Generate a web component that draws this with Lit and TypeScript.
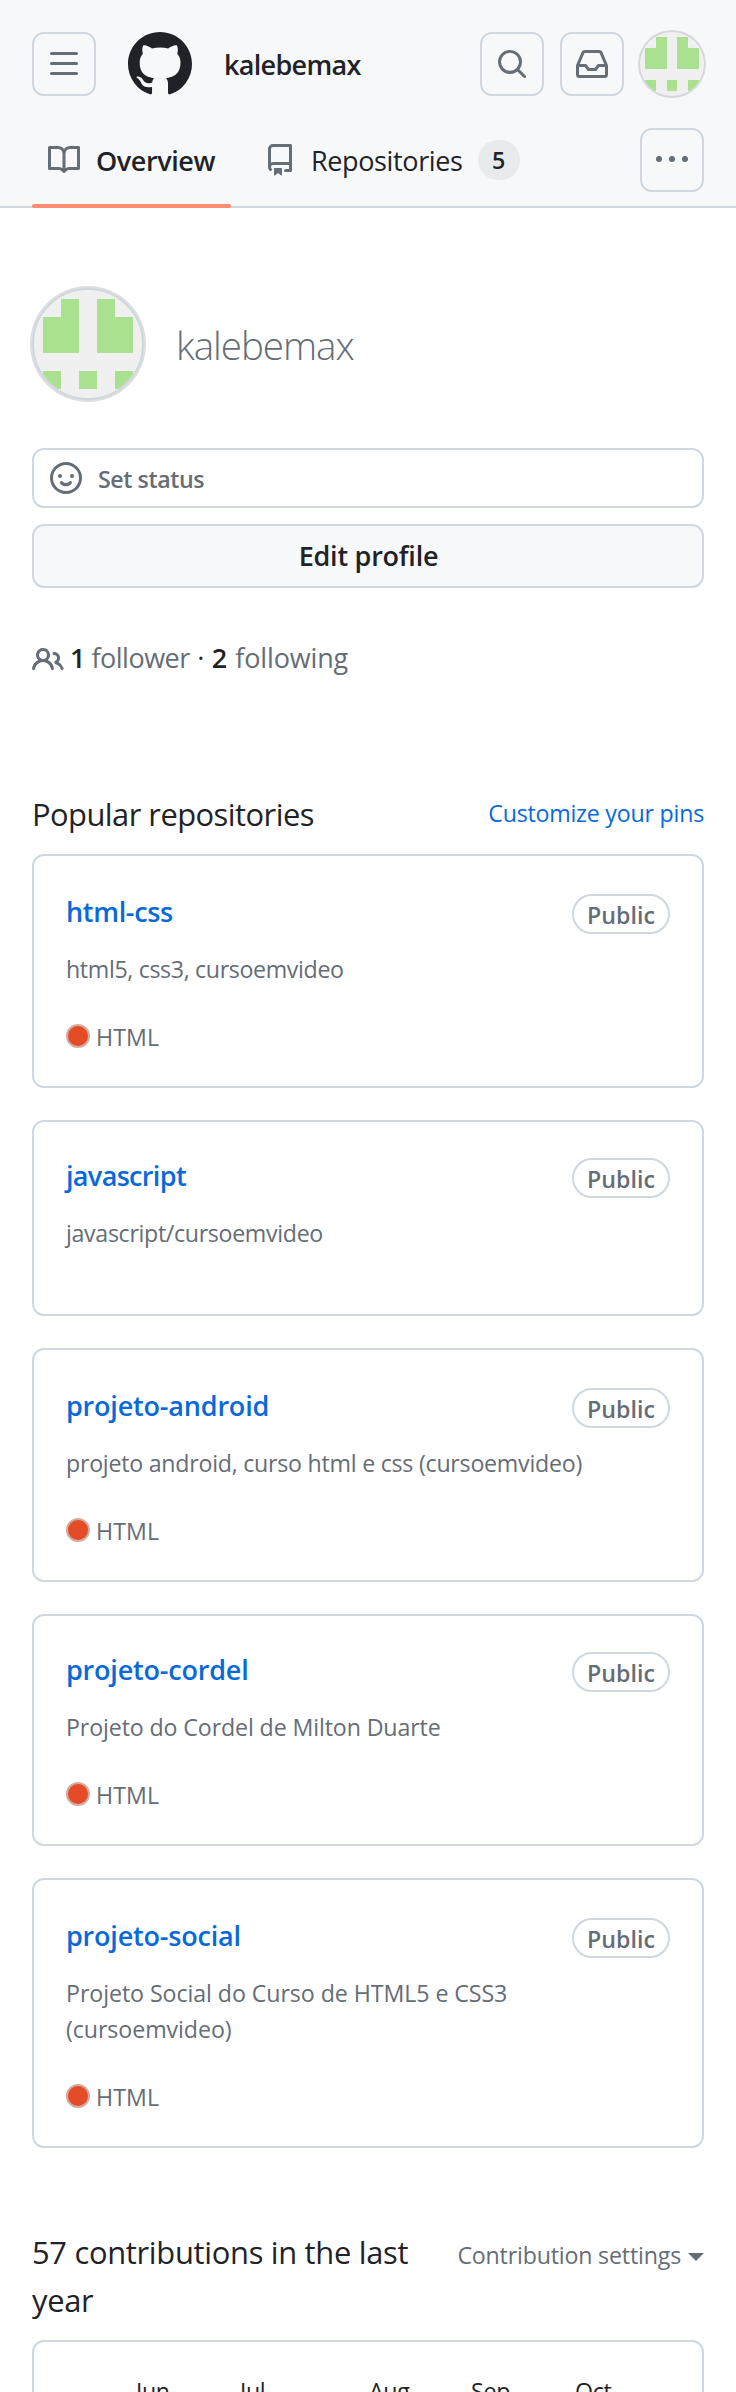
import { LitElement, html, css, svg } from "lit";
import { customElement, property } from "lit/decorators.js";
import { styleMap } from "lit/directives/style-map.js";

const icons: Record<string, string> = {
  bars: "M1 2.75A.75.75 0 0 1 1.75 2h12.5a.75.75 0 0 1 0 1.5H1.75A.75.75 0 0 1 1 2.75Zm0 5A.75.75 0 0 1 1.75 7h12.5a.75.75 0 0 1 0 1.5H1.75A.75.75 0 0 1 1 7.75ZM1.75 12h12.5a.75.75 0 0 1 0 1.5H1.75a.75.75 0 0 1 0-1.5Z",
  mark: "M8 0c4.42 0 8 3.58 8 8a8.013 8.013 0 0 1-5.45 7.59c-.4.08-.55-.17-.55-.38 0-.27.01-1.13.01-2.2 0-.75-.25-1.23-.54-1.48 1.78-.2 3.65-.88 3.65-3.95 0-.88-.31-1.59-.82-2.15.08-.2.36-1.02-.08-2.12 0 0-.67-.22-2.2.82-.64-.18-1.32-.27-2-.27-.68 0-1.36.09-2 .27-1.53-1.03-2.2-.82-2.2-.82-.44 1.1-.16 1.92-.08 2.12-.51.56-.82 1.28-.82 2.15 0 3.06 1.86 3.75 3.64 3.95-.23.2-.44.55-.51 1.07-.46.21-1.61.55-2.33-.66-.15-.24-.6-.83-1.23-.82-.67.01-.27.38.01.53.34.19.73.9.82 1.13.16.45.68 1.31 2.69.94 0 .67.01 1.3.01 1.49 0 .21-.15.45-.55.38A7.995 7.995 0 0 1 0 8c0-4.42 3.58-8 8-8Z",
  search: "M10.68 11.74a6 6 0 0 1-7.922-8.982 6 6 0 0 1 8.982 7.922l3.04 3.04a.749.749 0 0 1-.326 1.275.749.749 0 0 1-.734-.215ZM11.5 7a4.499 4.499 0 1 0-8.997 0A4.499 4.499 0 0 0 11.5 7Z",
  inbox: "M2.8 2.06A1.75 1.75 0 0 1 4.41 1h7.18c.7 0 1.333.417 1.61 1.06l2.74 6.395c.04.093.06.194.06.295v4.5A1.75 1.75 0 0 1 14.25 15H1.75A1.75 1.75 0 0 1 0 13.25v-4.5c0-.101.02-.202.06-.295Zm1.61.44a.25.25 0 0 0-.23.152L1.887 8H4.75a.75.75 0 0 1 .6.3L6.625 10h2.75l1.275-1.7a.75.75 0 0 1 .6-.3h2.863L11.82 2.652a.25.25 0 0 0-.23-.152Zm10.09 7h-2.875l-1.275 1.7a.75.75 0 0 1-.6.3h-3.5a.75.75 0 0 1-.6-.3L4.375 9.5H1.5v3.75c0 .138.112.25.25.25h12.5a.25.25 0 0 0 .25-.25Z",
  book: "M0 1.75A.75.75 0 0 1 .75 1h4.253c1.227 0 2.317.59 3 1.501A3.743 3.743 0 0 1 11.006 1h4.245a.75.75 0 0 1 .75.75v10.5a.75.75 0 0 1-.75.75h-4.507a2.25 2.25 0 0 0-1.591.659l-.622.621a.75.75 0 0 1-1.06 0l-.622-.621A2.25 2.25 0 0 0 5.258 13H.75a.75.75 0 0 1-.75-.75Zm7.251 10.324.004-5.073-.002-2.253A2.25 2.25 0 0 0 5.003 2.5H1.5v9h3.757a3.75 3.75 0 0 1 1.994.574ZM8.755 4.75l-.004 7.322a3.752 3.752 0 0 1 1.992-.572H14.5v-9h-3.495a2.25 2.25 0 0 0-2.25 2.25Z",
  repo: "M2 2.5A2.5 2.5 0 0 1 4.5 0h8.75a.75.75 0 0 1 .75.75v12.5a.75.75 0 0 1-.75.75h-2.5a.75.75 0 0 1 0-1.5h1.75v-2h-8a1 1 0 0 0-.714 1.7.75.75 0 1 1-1.072 1.05A2.495 2.495 0 0 1 2 11.5Zm10.5-1h-8a1 1 0 0 0-1 1v6.708A2.486 2.486 0 0 1 4.5 9h8ZM5 12.25a.25.25 0 0 1 .25-.25h3.5a.25.25 0 0 1 .25.25v3.25a.25.25 0 0 1-.4.2l-1.45-1.087a.249.249 0 0 0-.3 0L5.4 15.7a.25.25 0 0 1-.4-.2Z",
  kebab: "M8 9a1.5 1.5 0 1 0 0-3 1.5 1.5 0 0 0 0 3ZM1.5 9a1.5 1.5 0 1 0 0-3 1.5 1.5 0 0 0 0 3Zm13 0a1.5 1.5 0 1 0 0-3 1.5 1.5 0 0 0 0 3Z",
  smiley: "M8 0a8 8 0 1 1 0 16A8 8 0 0 1 8 0ZM1.5 8a6.5 6.5 0 1 0 13 0 6.5 6.5 0 0 0-13 0Zm3.82 1.636a.75.75 0 0 1 1.038.175l.007.009c.103.118.22.222.35.31.264.178.683.37 1.285.37.602 0 1.02-.192 1.285-.371.13-.088.247-.192.35-.31l.007-.008a.75.75 0 0 1 1.222.87c-.09.12-.17.22-.28.32-.16.166-.338.316-.53.445-.63.418-1.37.638-2.127.629-.946 0-1.652-.308-2.126-.63a3.331 3.331 0 0 1-.715-.657l-.02-.03a.75.75 0 0 1 .17-1.044ZM12 7a1 1 0 1 1-2 0 1 1 0 0 1 2 0ZM5 8a1 1 0 1 1 0-2 1 1 0 0 1 0 2Z",
  people: "M2 5.5a3.5 3.5 0 1 1 5.898 2.549 5.508 5.508 0 0 1 3.034 4.084.75.75 0 1 1-1.482.235 4 4 0 0 0-7.9 0 .75.75 0 0 1-1.482-.236A5.507 5.507 0 0 1 3.102 8.05 3.493 3.493 0 0 1 2 5.5ZM11 4a3.001 3.001 0 0 1 2.22 5.018 5.01 5.01 0 0 1 2.56 3.012.749.749 0 0 1-.885.954.752.752 0 0 1-.549-.514 3.507 3.507 0 0 0-2.522-2.372.75.75 0 0 1-.574-.73v-.352a.75.75 0 0 1 .416-.672A1.5 1.5 0 0 0 11 5.5.75.75 0 0 1 11 4Zm-5.5-.5a2 2 0 1 0-.001 3.999A2 2 0 0 0 5.5 3.5Z",
};

@customElement("gh-icon")
class GhIcon extends LitElement {
  @property() name = "";
  static styles = css`
    :host { display: block; width: 32px; height: 32px; flex: none; color: #656d76; }
    .svg { display: block; width: 100%; height: 100%; fill: currentColor; }
  `;
  render() {
    return html`<svg class="svg" viewBox="0 0 16 16" aria-hidden="true"><path d=${icons[this.name]}></path></svg>`;
  }
}

// Identicon cells, [column, row] on a 5×5 grid.
const cells = [
  [1, 0], [3, 0],
  [0, 1], [1, 1], [3, 1], [4, 1],
  [0, 2], [1, 2], [3, 2], [4, 2],
  [0, 4], [2, 4], [4, 4],
];

@customElement("gh-avatar")
class GhAvatar extends LitElement {
  static styles = css`
    :host { display: block; flex: none; border-radius: 50%; overflow: hidden; background: #f0f0f0; }
    .svg { display: block; width: 100%; height: 100%; fill: #a9e190; shape-rendering: crispEdges; }
  `;
  render() {
    return html`<svg class="svg" viewBox="0 0 12 12">
      ${cells.map(([c, r]) => svg`<rect x=${1 + c * 2} y=${1 + r * 2} width="2" height="2"></rect>`)}
    </svg>`;
  }
}

interface Repo {
  name: string;
  desc: string;
  lang?: string;
  compact?: boolean;
  tracking: number;
  descTracking: number;
}

const repos: Repo[] = [
  { name: "html-css", desc: "html5, css3, cursoemvideo", lang: "HTML", tracking: -0.32, descTracking: -0.35 },
  { name: "javascript", desc: "javascript/cursoemvideo", compact: true, tracking: -0.66, descTracking: -0.33 },
  { name: "projeto-android", desc: "projeto android, curso html e css (cursoemvideo)", lang: "HTML", tracking: -0.19, descTracking: -0.25 },
  { name: "projeto-cordel", desc: "Projeto do Cordel de Milton Duarte", lang: "HTML", compact: true, tracking: -0.2, descTracking: -0.12 },
  { name: "projeto-social", desc: "Projeto Social do Curso de HTML5 e CSS3 (cursoemvideo)", lang: "HTML", tracking: -0.2, descTracking: -0.07 },
];

@customElement("repo-card")
class RepoCard extends LitElement {
  @property({ attribute: false }) repo!: Repo;
  static styles = css`
    :host { display: block; }
    .card { border: 2px solid #d0d7de; border-radius: 12px; padding: 38px 32px 31px; }
    .compact { padding-top: 36px; }
    .top { display: flex; justify-content: space-between; align-items: flex-start; height: 40px; }
    .name { color: #0969da; font-size: 27px; font-weight: 600; line-height: 35px; }
    .pill {
      box-sizing: border-box; width: 98px; height: 40px; border: 2px solid #d0d7de; border-radius: 40px;
      text-align: center; font-size: 23.2px; font-weight: 600; line-height: 38px; color: #656d76;
    }
    .desc { margin: 17px 0 0; font-size: 23.2px; line-height: 36px; color: #656d76; max-width: 540px; }
    .foot { display: flex; align-items: center; gap: 6px; margin-top: 32px; font-size: 23.2px; line-height: 36px; color: #656d76; letter-spacing: 0.1px; }
    .dot { box-sizing: border-box; width: 24px; height: 24px; border-radius: 50%; background: #e34c26; border: 2px solid #d6a9a1; margin-bottom: 2px; }
  `;
  render() {
    const r = this.repo;
    return html`<article class="card ${r.compact ? "compact" : ""}">
      <div class="top">
        <a class="name" style=${styleMap({ letterSpacing: `${r.tracking}px` })}>${r.name}</a>
        <span class="pill">Public</span>
      </div>
      <p class="desc" style=${styleMap({ letterSpacing: `${r.descTracking}px` })}>${r.desc}</p>
      <div class="foot">${r.lang ? html`<span class="dot"></span><span>${r.lang}</span>` : null}</div>
    </article>`;
  }
}

@customElement("app-root")
class AppRoot extends LitElement {
  static styles = css`
    :host {
      display: block; height: 2392px; overflow: hidden; background: #fff; color: #1f2328;
      font-family: "Open Sans", "Noto Sans", sans-serif;
    }
    .header { box-sizing: border-box; height: 208px; padding: 32px 32px 0; background: #f6f8fa; border-bottom: 2px solid #d0d7de; }
    .bar { display: flex; align-items: center; height: 64px; }
    .btn {
      box-sizing: border-box; width: 64px; height: 64px; flex: none; display: grid; place-items: center;
      border: 2px solid #d0d7de; border-radius: 12px;
    }
    .logo { width: 64px; height: 64px; margin-left: 32px; color: #1f2328; }
    .user { margin-left: 32px; font-size: 27px; font-weight: 600; line-height: 35px; letter-spacing: -0.69px; }
    .actions { margin-left: auto; display: flex; gap: 16px; }
    .me { width: 64px; height: 64px; box-shadow: 0 0 0 2px #d5d8dc; }
    .tabs { display: flex; align-items: flex-start; margin-top: 32px; }
    .tab { display: flex; align-items: center; gap: 16px; height: 64px; padding: 0 16px; font-size: 27px; line-height: 35px; }
    .active { position: relative; font-weight: 600; letter-spacing: -0.43px; width: 167px; margin-right: 17px; }
    .active::after { content: ""; position: absolute; left: 0; right: 0; top: 76px; height: 4px; border-radius: 2px; background: #fd8c73; }
    .label { letter-spacing: -0.37px; margin-left: -1px; }
    .count {
      width: 42px; height: 40px; border-radius: 20px; background: #e8ebee; text-align: center;
      font-size: 23.2px; font-weight: 600; line-height: 41px; margin-left: -1px;
    }
    .more { margin-left: auto; }

    .main { display: flex; flex-direction: column; padding: 80px 32px 0; }
    .profile { display: flex; align-items: center; gap: 32px; height: 112px; }
    .portrait { width: 108px; height: 108px; border: 2px solid #d0d7de; box-shadow: 0 0 0 2px #dddedf; }
    .name { margin: 0; padding-top: 2px; font-size: 38.6px; font-weight: 300; line-height: 52px; color: #656d76; letter-spacing: -1.03px; }
    .status {
      box-sizing: border-box; height: 60px; margin-top: 48px; padding: 0 16px; display: flex; align-items: center; gap: 16px;
      border: 2px solid #d0d7de; border-radius: 12px; color: #656d76;
    }
    .status-text { font-size: 23.2px; font-weight: 600; line-height: 36px; letter-spacing: -0.43px; padding-top: 2px; }
    .edit {
      box-sizing: border-box; height: 64px; margin-top: 16px; padding-left: 1px; border: 2px solid #d0d7de; border-radius: 12px; background: #f6f8fa;
      text-align: center; font-size: 27px; font-weight: 600; line-height: 59px; letter-spacing: -0.24px;
    }
    .follow { display: flex; height: 36px; margin-top: 52px; font-size: 27px; line-height: 35px; color: #656d76; }
    .people { margin: 4px 6px 0 0; }
    .num { font-weight: 600; color: #1f2328; }
    .follower { margin-left: 6px; letter-spacing: -0.5px; }
    .sep { width: 22px; text-align: center; color: #1f2328; }
    .following { margin-left: 8px; letter-spacing: -0.14px; }

    .row { display: flex; justify-content: space-between; align-items: flex-start; }
    .heading { margin: 0; font-size: 30.9px; font-weight: 400; line-height: 48px; }
    .popular { margin-top: 114px; }
    .pop-title { letter-spacing: -0.54px; }
    .pins { margin-top: 5px; font-size: 23.2px; line-height: 36px; color: #0969da; letter-spacing: -0.22px; }
    .list { display: flex; flex-direction: column; gap: 32px; margin-top: 16px; }
    .contrib { margin-top: 80px; }
    .contrib-title { width: 400px; letter-spacing: -0.31px; }
    .settings { display: flex; align-items: center; gap: 7px; margin-top: 9px; font-size: 23.2px; line-height: 36px; color: #656d76; letter-spacing: -0.18px; }
    .caret { border: 8px solid transparent; border-top-color: #656d76; border-bottom: 0; margin-top: 4px; }
    .graph {
      box-sizing: border-box; height: 80px; margin-top: 16px; padding: 31px 0 0 102px; border: 2px solid #d0d7de; border-radius: 12px;
      display: grid; grid-template-columns: 104px 129px 102px 104px auto; font-size: 23.2px; line-height: 36px; letter-spacing: -0.3px;
    }
  `;
  render() {
    return html`
      <header class="header">
        <div class="bar">
          <span class="btn"><gh-icon name="bars"></gh-icon></span>
          <gh-icon class="logo" name="mark"></gh-icon>
          <span class="user">kalebemax</span>
          <div class="actions">
            <span class="btn"><gh-icon name="search"></gh-icon></span>
            <span class="btn"><gh-icon name="inbox"></gh-icon></span>
            <gh-avatar class="me"></gh-avatar>
          </div>
        </div>
        <nav class="tabs">
          <a class="tab active"><gh-icon name="book"></gh-icon><span>Overview</span></a>
          <a class="tab"><gh-icon name="repo"></gh-icon><span class="label">Repositories</span><span class="count">5</span></a>
          <span class="btn more"><gh-icon name="kebab"></gh-icon></span>
        </nav>
      </header>
      <main class="main">
        <div class="profile">
          <gh-avatar class="portrait"></gh-avatar>
          <h1 class="name">kalebemax</h1>
        </div>
        <div class="status"><gh-icon name="smiley"></gh-icon><span class="status-text">Set status</span></div>
        <div class="edit">Edit profile</div>
        <div class="follow">
          <gh-icon class="people" name="people"></gh-icon>
          <span class="num">1</span><span class="follower">follower</span>
          <span class="sep">·</span>
          <span class="num">2</span><span class="following">following</span>
        </div>
        <div class="row popular">
          <h2 class="heading pop-title">Popular repositories</h2>
          <a class="pins">Customize your pins</a>
        </div>
        <div class="list">${repos.map((r) => html`<repo-card .repo=${r}></repo-card>`)}</div>
        <div class="row contrib">
          <h2 class="heading contrib-title">57 contributions in the last year</h2>
          <span class="settings">Contribution settings<span class="caret"></span></span>
        </div>
        <div class="graph">
          ${["Jun", "Jul", "Aug", "Sep", "Oct"].map((m) => html`<span>${m}</span>`)}
        </div>
      </main>
    `;
  }
}
